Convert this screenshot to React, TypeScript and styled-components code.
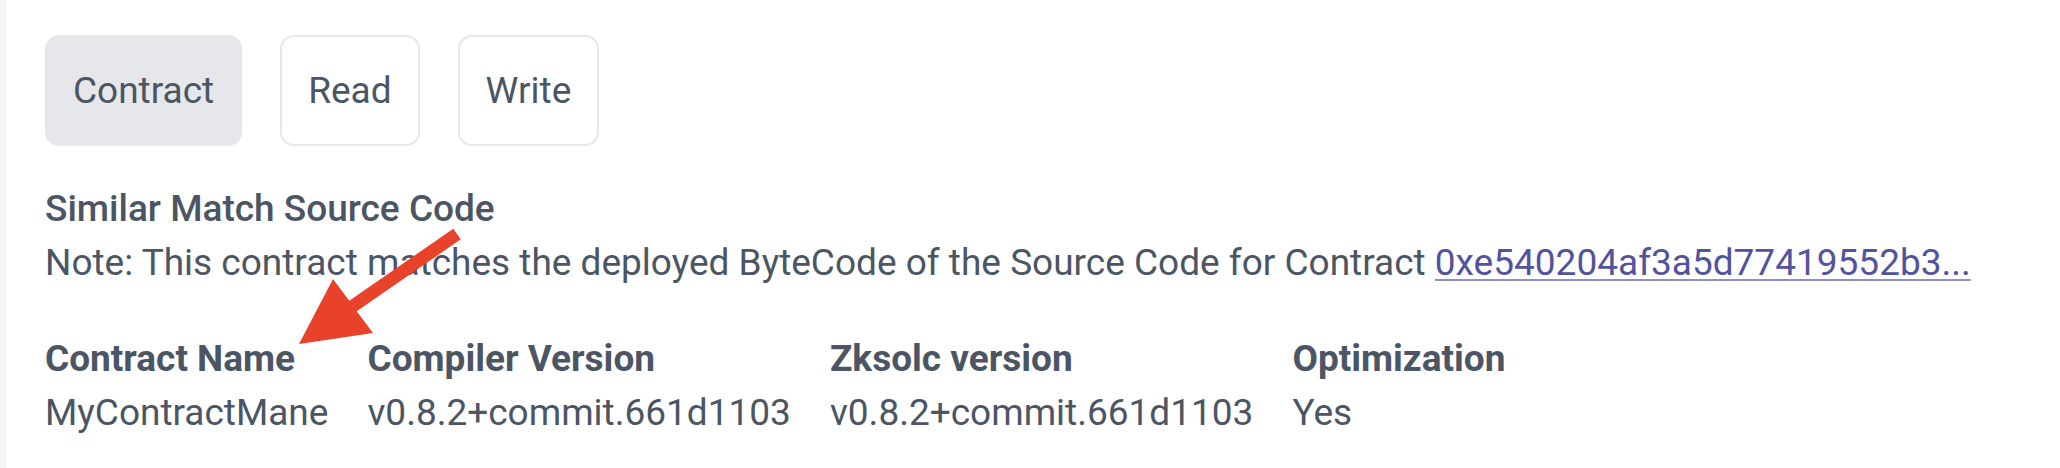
import React from "react";
import styled, { createGlobalStyle } from "styled-components";

const GlobalStyle = createGlobalStyle`
  html, body {
    margin: 0;
    padding: 0;
    background: #ffffff;
  }
  body {
    font-family: Roboto, "Liberation Sans", Arial, sans-serif;
    color: #4b5563;
  }
`;

const Page = styled.div`
  position: relative;
  box-sizing: border-box;
  width: 2060px;
  height: 468px;
  border-left: 6px solid #f3f4f6;
  background: #ffffff;
  padding: 35px 0 0 39px;
`;

const Tabs = styled.div`
  display: flex;
  gap: 38px;
`;

const Tab = styled.button<{ $active?: boolean }>`
  box-sizing: border-box;
  height: 111px;
  padding: 0 26px;
  display: flex;
  align-items: center;
  justify-content: center;
  font-family: Roboto, "Liberation Sans", Arial, sans-serif;
  font-size: 37px;
  font-weight: 400;
  color: #4b5563;
  background: ${(p) => (p.$active ? "#e5e7eb" : "#ffffff")};
  border: 2px solid #e5e7eb;
  border-radius: 14px;
  cursor: pointer;
`;

const Section = styled.div`
  margin-top: 36px;
  font-size: 37px;
  line-height: 54px;
`;

const Heading = styled.div`
  font-weight: 500;
`;

const Note = styled.div`
  font-weight: 400;
  white-space: nowrap;
`;

const Link = styled.a`
  color: #52539c;
  text-decoration: underline;
  text-decoration-color: #8e90c6;
  text-decoration-thickness: 2px;
  text-underline-offset: 4px;
`;

const Details = styled.div`
  display: flex;
  gap: 39px;
  margin-top: 42px;
`;

const Column = styled.div`
  display: flex;
  flex-direction: column;
`;

const Label = styled.div`
  font-weight: 700;
  white-space: nowrap;
`;

const Value = styled.div`
  font-weight: 400;
  white-space: nowrap;
`;

const ArrowSvg = styled.svg`
  position: absolute;
  left: 284px;
  top: 220px;
  width: 180px;
  height: 135px;
  pointer-events: none;
`;

const details = [
  { label: "Contract Name", value: "MyContractMane" },
  { label: "Compiler Version", value: "v0.8.2+commit.661d1103" },
  { label: "Zksolc version", value: "v0.8.2+commit.661d1103" },
  { label: "Optimization", value: "Yes" },
];

export default function App() {
  return (
    <>
      <GlobalStyle />
      <Page>
        <Tabs>
          <Tab $active>Contract</Tab>
          <Tab>Read</Tab>
          <Tab>Write</Tab>
        </Tabs>
        <Section>
          <Heading>Similar Match Source Code</Heading>
          <Note>
            Note: This contract matches the deployed ByteCode of the Source Code for Contract{" "}
            <Link href="#">0xe540204af3a5d77419552b3...</Link>
          </Note>
          <Details>
            {details.map((d) => (
              <Column key={d.label}>
                <Label>{d.label}</Label>
                <Value>{d.value}</Value>
              </Column>
            ))}
          </Details>
        </Section>
        <ArrowSvg viewBox="290 220 180 135">
          <polygon
            points="299,344 333,279 349.3,300.7 453.3,228.7 460.7,239.3 356.7,311.3 373,333"
            fill="#e8432a"
          />
        </ArrowSvg>
      </Page>
    </>
  );
}
